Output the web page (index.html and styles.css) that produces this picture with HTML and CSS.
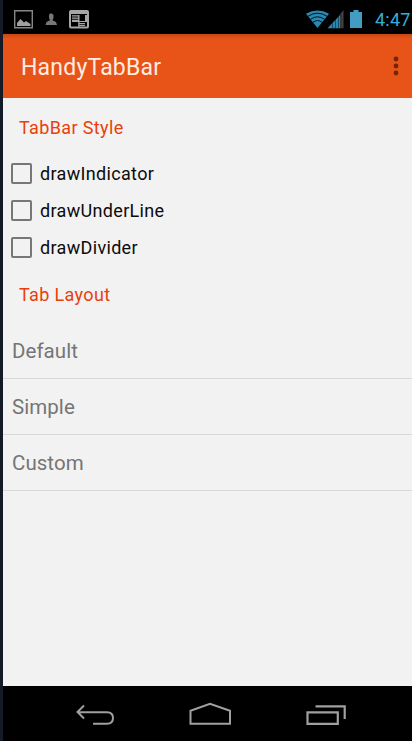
FILE: index.html
```html
<!DOCTYPE html>
<html lang="en">
<head>
<meta charset="utf-8">
<title>HandyTabBar</title>
<link rel="stylesheet" href="styles.css">
</head>
<body>
<div class="screen">
  <header class="status">
    <svg width="90" height="34" viewBox="3 0 90 34">
      <path fill="none" stroke="#858585" stroke-width="1.400" d="M14.700 10.700h17.600v17H14.700z"/>
      <path fill="#a0a0a0" d="M17 26v-3l3.500-4 3.500 3.500 2-1.500 4.500 3V26z"/>
      <path fill="#777" d="M50 13.500h2l1.500 1.500v3l-1 2.200 3.500 1.800 1 3H45.500l1-3 3.500-1.800-1-2.200v-3z"/>
      <rect x="70" y="11" width="18" height="16.500" rx="1" fill="none" stroke="#a6a6a6" stroke-width="2"/>
      <path fill="#a6a6a6" d="M70 11h18v3H70zM72 15.300h6.500v1.200H72zM72 17.500h6.500v1.200H72zM72 19.700h6.500v1.200H72zM72 21h15v1H72zM78.200 15h1.300v12h-1.300zM79.500 23h5.500v1.200h-5.500zM79.500 25h5.500v1h-5.500zM85 15h2v6h-2z"/>
    </svg>
    <div class="status-right">
      <svg width="60" height="34" viewBox="0 0 60 34">
        <path fill="#2889b3" d="M1 13.800Q12.500 7.200 24 13.800L12.500 28z"/>
        <g fill="none" stroke="#05141b" stroke-width="1"><path d="M3 16.300q9.500-6.200 19 0M5.500 19.300q7-5 14 0M8 22.300q4.500-3.500 9 0"/></g>
        <path fill="#2889b3" d="M22.500 28.300 35 15v13.300z"/>
        <path fill="#444" d="M35 14.500 38.500 10v18.300H35z"/>
        <path stroke="#062330" stroke-width=".6" d="M27.500 22v7M30.500 19v10M33.500 16v13M36 14v15"/>
        <path fill="#439cc2" d="M45 12h3.500v-2h5v2H57v16H45z"/>
      </svg>
      <span class="clock">4:47</span>
    </div>
  </header>
  <div class="appbar">
    <h1>HandyTabBar</h1>
    <svg width="6" height="20" viewBox="0 0 6 20" fill="#742506"><circle cx="3" cy="3" r="2.400"/><circle cx="3" cy="10" r="2.400"/><circle cx="3" cy="17" r="2.400"/></svg>
  </div>
  <main>
    <h2 class="style-title">TabBar Style</h2>
    <div class="checks">
      <label><i></i><span>drawIndicator</span></label>
      <label><i></i><span>drawUnderLine</span></label>
      <label><i></i><span>drawDivider</span></label>
    </div>
    <h2 class="layout-title">Tab Layout</h2>
    <ul>
      <li>Default</li>
      <li>Simple</li>
      <li>Custom</li>
    </ul>
  </main>
  <nav>
    <svg width="409" height="55" viewBox="3 686 409 55" fill="none" stroke="#a0a0a0" stroke-width="2">
      <path d="M84 705.500l-6.500 6.500 6.500 6.500M77.500 712.300H107q6 0 6 5.700t-6 5.700H93"/>
      <path d="M190.500 723.700v-13l19.500-6.900 20 6.900v13z"/>
      <path d="M307.500 712.300h30.300v11.500h-30.300zM315.500 706.300h29.200V719" stroke-width="2.200"/>
    </svg>
  </nav>
</div>
</body>
</html>
```
FILE: styles.css
```css
* { box-sizing: border-box; }
body { margin: 0; background: #141b27; font-family: Roboto, sans-serif; }
.screen { margin-left: 3px; height: 741px; display: flex; flex-direction: column; background: #f2f2f2; overflow: hidden; }
svg { display: block; }
.status { height: 34px; background: #000; display: flex; justify-content: space-between; }
.status-right { display: flex; }
.clock { width: 47px; padding-left: 10px; font-size: 18px; line-height: 40px; color: #33afdc; letter-spacing: .2px; white-space: nowrap; }
.appbar { height: 64px; background: linear-gradient(#c94712, #e85418 5px); display: flex; align-items: center; justify-content: space-between; padding: 0 13px 0 18px; }
h1 { margin: 4px 0 0; font-size: 23px; line-height: 30px; font-weight: 400; color: #ffece2; letter-spacing: .2px; }
main { flex: 1; }
h2 { margin: 0; padding-left: 16px; font-size: 18px; font-weight: 400; color: #ea3e0b; line-height: 24px; letter-spacing: .36px; }
.style-title { margin-top: 18px; }
.checks { margin-top: 15px; }
label { display: flex; align-items: center; height: 37px; padding-left: 8px; font-size: 18px; color: #0c0c0c; letter-spacing: .33px; }
label i { width: 21px; height: 21px; border: 2px solid #777; border-radius: 2px; margin-right: 8px; }
.layout-title { margin-top: 17px; }
ul { list-style: none; margin: 16px 0 0; padding: 0; }
li { height: 56px; border-bottom: 1px solid #d9d9d9; padding-left: 9px; font-size: 20.500px; line-height: 57px; color: #757575; letter-spacing: .05px; }
nav { height: 55px; background: #000; }
```
